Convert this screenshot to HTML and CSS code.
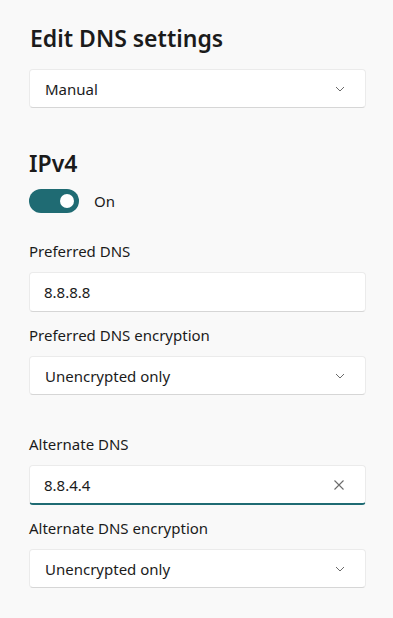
FILE: index.html
```html
<!DOCTYPE html>
<html lang="en">
<head>
  <meta charset="UTF-8">
  <title>Edit DNS settings</title>
  <link rel="stylesheet" href="styles.css">
</head>
<body>
  <div class="dns-panel">
    <h2 class="title">Edit DNS settings</h2>
    <div class="select">
      <span>Manual</span>
      <svg class="chevron" width="10" height="6" viewBox="0 0 10 6"><path d="M1 1l4 4 4-4" fill="none" stroke="#6a6a6a" stroke-width="1"/></svg>
    </div>

    <h3 class="section">IPv4</h3>
    <div class="toggle-row">
      <div class="toggle"><div class="knob"></div></div>
      <span>On</span>
    </div>

    <div class="field first">
      <label>Preferred DNS</label>
      <div class="input"><span>8.8.8.8</span></div>
    </div>
    <div class="field">
      <label>Preferred DNS encryption</label>
      <div class="select">
        <span>Unencrypted only</span>
        <svg class="chevron" width="10" height="6" viewBox="0 0 10 6"><path d="M1 1l4 4 4-4" fill="none" stroke="#6a6a6a" stroke-width="1"/></svg>
      </div>
    </div>

    <div class="field spaced">
      <label>Alternate DNS</label>
      <div class="input focused">
        <span>8.8.4.4</span>
        <svg class="clear" width="12" height="12" viewBox="0 0 12 12"><path d="M1.5 1.5l9 9M10.5 1.5l-9 9" fill="none" stroke="#6b6b6b" stroke-width="1.1"/></svg>
      </div>
    </div>
    <div class="field">
      <label>Alternate DNS encryption</label>
      <div class="select">
        <span>Unencrypted only</span>
        <svg class="chevron" width="10" height="6" viewBox="0 0 10 6"><path d="M1 1l4 4 4-4" fill="none" stroke="#6a6a6a" stroke-width="1"/></svg>
      </div>
    </div>
  </div>
</body>
</html>
```

FILE: styles.css
```css
body {
  margin: 0;
  padding: 0;
  background-color: #f9f9f9;
  font-family: "Noto Sans", "Open Sans", sans-serif;
  color: #1b1b1b;
}

.dns-panel {
  width: 337px;
  margin-left: 29px;
  padding-top: 20px;
}

.title {
  margin: 0 0 13px 1px;
  font-size: 23px;
  font-weight: 600;
  line-height: 36px;
}

.select, .input {
  box-sizing: border-box;
  height: 39px;
  display: flex;
  align-items: center;
  justify-content: space-between;
  padding: 0 20px 0 15px;
  background-color: #ffffff;
  border: 1px solid #ebebeb;
  border-bottom-color: #d6d6d6;
  border-radius: 4px;
  font-size: 15px;
}

.input {
  height: 40px;
  padding-left: 14px;
}

.input.focused {
  border-bottom: 2px solid #1f6b73;
}

.section {
  margin: 40px 0 0 0;
  font-size: 23px;
  font-weight: 600;
  line-height: 30px;
}

.toggle-row {
  display: flex;
  align-items: center;
  margin-top: 11px;
  font-size: 15px;
}

.toggle {
  width: 50px;
  height: 24px;
  border-radius: 12px;
  background-color: #1f6b73;
  display: flex;
  align-items: center;
  justify-content: flex-end;
  padding-right: 5px;
  box-sizing: border-box;
  margin-right: 15px;
}

.knob {
  width: 14px;
  height: 14px;
  border-radius: 50%;
  background-color: #ffffff;
}

.field {
  margin-top: 13px;
}

.field.first {
  margin-top: 28px;
}

.field label {
  display: block;
  font-size: 15px;
  line-height: 20px;
  margin-bottom: 11px;
}

.field.spaced {
  margin-top: 39px;
}
```
